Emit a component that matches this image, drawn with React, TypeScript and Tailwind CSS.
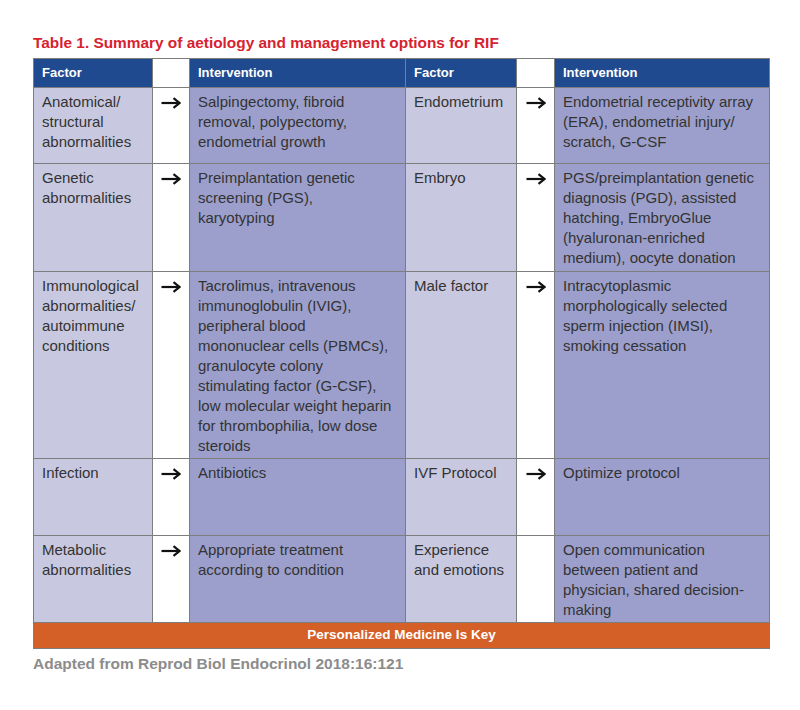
import React from "react";

type Row = {
  f1: string[];
  a1: boolean;
  i1: string[];
  f2: string[];
  a2: boolean;
  i2: string[];
  h: string;
};

const rows: Row[] = [
  {
    f1: ["Anatomical/", "structural", "abnormalities"],
    a1: true,
    i1: ["Salpingectomy, fibroid", "removal, polypectomy,", "endometrial growth"],
    f2: ["Endometrium"],
    a2: true,
    i2: ["Endometrial receptivity array", "(ERA), endometrial injury/", "scratch, G-CSF"],
    h: "h-[75px]",
  },
  {
    f1: ["Genetic", "abnormalities"],
    a1: true,
    i1: ["Preimplantation genetic", "screening (PGS),", "karyotyping"],
    f2: ["Embryo"],
    a2: true,
    i2: [
      "PGS/preimplantation genetic",
      "diagnosis (PGD), assisted",
      "hatching, EmbryoGlue",
      "(hyaluronan-enriched",
      "medium), oocyte donation",
    ],
    h: "h-[107px]",
  },
  {
    f1: ["Immunological", "abnormalities/", "autoimmune", "conditions"],
    a1: true,
    i1: [
      "Tacrolimus, intravenous",
      "immunoglobulin (IVIG),",
      "peripheral blood",
      "mononuclear cells (PBMCs),",
      "granulocyte colony",
      "stimulating factor (G-CSF),",
      "low molecular weight heparin",
      "for thrombophilia, low dose",
      "steroids",
    ],
    f2: ["Male factor"],
    a2: true,
    i2: ["Intracytoplasmic", "morphologically selected", "sperm injection (IMSI),", "smoking cessation"],
    h: "h-[186px]",
  },
  {
    f1: ["Infection"],
    a1: true,
    i1: ["Antibiotics"],
    f2: ["IVF Protocol"],
    a2: true,
    i2: ["Optimize protocol"],
    h: "h-[76px]",
  },
  {
    f1: ["Metabolic", "abnormalities"],
    a1: true,
    i1: ["Appropriate treatment", "according to condition"],
    f2: ["Experience", "and emotions"],
    a2: false,
    i2: ["Open communication", "between patient and", "physician, shared decision-", "making"],
    h: "h-[86px]",
  },
];

function Lines({ lines }: { lines: string[] }) {
  return (
    <>
      {lines.map((l, i) => (
        <div key={i} className="whitespace-nowrap">
          {l}
        </div>
      ))}
    </>
  );
}

function Arrow({ show }: { show: boolean }) {
  return (
    <div className="bg-white flex justify-center pt-[9px]">
      {show && (
        <svg width="20" height="12" viewBox="0 0 20 12" fill="none" stroke="#111" strokeWidth="2.2">
          <path d="M0.5 6 H18" />
          <path d="M12.5 1.2 L18.5 6 L12.5 10.8" strokeLinejoin="miter" />
        </svg>
      )}
    </div>
  );
}

export default function App() {
  return (
    <div
      className="bg-white w-[800px] h-[710px] pl-[33px] pt-[34px]"
      style={{ fontFamily: '"Liberation Sans", Arial, sans-serif' }}
    >
      <div className="text-[15.4px] leading-[18px] font-bold text-[#d7222f]">
        Table 1. Summary of aetiology and management options for RIF
      </div>
      <div className="mt-[6px] w-[737px] border border-[#7d7d7d] bg-[#7d7d7d]">
        <div className="grid grid-cols-[118px_36px_215px_110px_37px_214px] gap-px">
          <div className="bg-[#1f4a8f] text-white font-bold text-[13px] h-[28px] flex items-center px-2">Factor</div>
          <div className="bg-white h-[28px]" />
          <div className="bg-[#1f4a8f] text-white font-bold text-[13px] h-[28px] flex items-center px-2">Intervention</div>
          <div className="bg-[#1f4a8f] text-white font-bold text-[13px] h-[28px] flex items-center px-2">Factor</div>
          <div className="bg-white h-[28px]" />
          <div className="bg-[#1f4a8f] text-white font-bold text-[13px] h-[28px] flex items-center px-2">Intervention</div>
          {rows.map((r, i) => (
            <React.Fragment key={i}>
              <div className={`${r.h} bg-[#c8c9e0] text-[#333] text-[15px] leading-[20px] px-2 pt-[4px]`}>
                <Lines lines={r.f1} />
              </div>
              <Arrow show={r.a1} />
              <div className={`${r.h} bg-[#9c9fcb] text-[#333] text-[15px] leading-[20px] px-2 pt-[4px]`}>
                <Lines lines={r.i1} />
              </div>
              <div className={`${r.h} bg-[#c8c9e0] text-[#333] text-[15px] leading-[20px] px-2 pt-[4px]`}>
                <Lines lines={r.f2} />
              </div>
              <Arrow show={r.a2} />
              <div className={`${r.h} bg-[#9c9fcb] text-[#333] text-[15px] leading-[20px] px-2 pt-[4px]`}>
                <Lines lines={r.i2} />
              </div>
            </React.Fragment>
          ))}
        </div>
        <div className="mt-px h-[25px] bg-[#d45f27] flex items-center justify-center text-white font-bold text-[13.5px]">
          Personalized Medicine Is Key
        </div>
      </div>
      <div className="mt-[6px] text-[15.5px] leading-[18px] font-bold text-[#8c8c8c]">
        Adapted from Reprod Biol Endocrinol 2018:16:121
      </div>
    </div>
  );
}
